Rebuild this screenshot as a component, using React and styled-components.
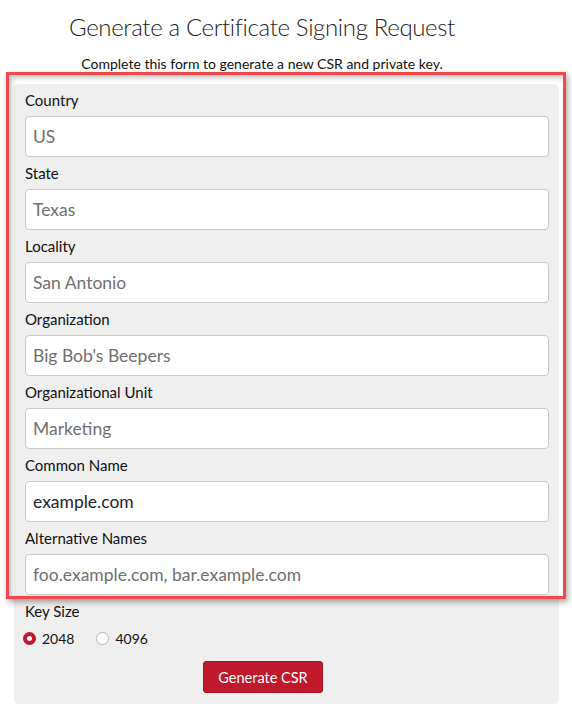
import React, { useState } from "react";
import styled, { createGlobalStyle } from "styled-components";

const GlobalStyle = createGlobalStyle`
  body {
    margin: 0;
    background: #ffffff;
    font-family: Lato, "Open Sans", sans-serif;
    color: #212529;
  }
`;

const Page = styled.div`
  width: 572px;
  padding-top: 8px;
`;

const Header = styled.div`
  text-align: center;
  padding-right: 48px;
`;

const Title = styled.h1`
  margin: 0;
  font-size: 24px;
  font-weight: 300;
  letter-spacing: -0.35px;
  line-height: 38px;
  color: #222;
`;

const Subtitle = styled.p`
  margin: 7px 0 0;
  font-size: 14px;
  line-height: 22px;
  color: #111;
`;

const Panel = styled.form`
  margin: 9px 13px 0 14px;
  padding: 6px 10px 11px 11px;
  background: #efefef;
  border-radius: 5px;
`;

const Group = styled.div`
  position: relative;
`;

const Highlight = styled.div`
  position: absolute;
  top: -18px;
  left: -19px;
  right: -17px;
  bottom: -4px;
  border: 3px solid #f2484b;
  pointer-events: none;
  box-shadow: 2px 3px 6px rgba(0, 0, 0, 0.35),
    inset 3px 3px 5px rgba(0, 0, 0, 0.22);
`;

const Field = styled.div`
  margin-bottom: 6px;
`;

const Label = styled.label`
  display: block;
  font-size: 15px;
  line-height: 20px;
  margin-top: ${(p) => (p.$gap ? "3px" : "0")};
  margin-bottom: 6px;
  color: #111;
`;

const Input = styled.input`
  box-sizing: border-box;
  display: block;
  width: 100%;
  height: 41px;
  padding: 0 7px;
  font-family: inherit;
  font-size: 17.5px;
  color: #212529;
  background: #fff;
  border: 1px solid #c8c8c8;
  border-radius: 4px;
  outline: none;

  &::placeholder {
    color: #6f6f6f;
  }
`;

const RadioRow = styled.div`
  display: flex;
  align-items: center;
  gap: 22px;
  margin-left: -2px;
  height: 22px;
`;

const RadioOption = styled.label`
  display: flex;
  align-items: center;
  gap: 6px;
  font-size: 14px;
  color: #111;
  cursor: pointer;
`;

const RadioDot = styled.span`
  box-sizing: border-box;
  width: 13px;
  height: 13px;
  border-radius: 50%;
  background: #fff;
  border: ${(p) => (p.$on ? "4px solid #c0192b" : "1px solid #b5b5b5")};
`;

const ButtonRow = styled.div`
  display: flex;
  justify-content: center;
  padding-right: 48px;
  margin-top: 12px;
`;

const Button = styled.button`
  height: 32px;
  padding: 0 14px;
  font-family: inherit;
  font-size: 14.5px;
  color: #fff;
  background: #c0192b;
  border: 1px solid #a8111f;
  border-radius: 3px;
  cursor: pointer;
`;

const fields = [
  { label: "Country", placeholder: "US" },
  { label: "State", placeholder: "Texas" },
  { label: "Locality", placeholder: "San Antonio" },
  { label: "Organization", placeholder: "Big Bob's Beepers" },
  { label: "Organizational Unit", placeholder: "Marketing" },
  { label: "Common Name", value: "example.com" },
  { label: "Alternative Names", placeholder: "foo.example.com, bar.example.com" },
];

export default function App() {
  const [keySize, setKeySize] = useState("2048");
  return (
    <Page>
      <GlobalStyle />
      <Header>
        <Title>Generate a Certificate Signing Request</Title>
        <Subtitle>Complete this form to generate a new CSR and private key.</Subtitle>
      </Header>
      <Panel onSubmit={(e) => e.preventDefault()}>
        <Group>
          {fields.map((f) => (
            <Field key={f.label}>
              <Label>{f.label}</Label>
              <Input placeholder={f.placeholder} defaultValue={f.value} />
            </Field>
          ))}
          <Highlight />
        </Group>
        <Label $gap>Key Size</Label>
        <RadioRow>
          {["2048", "4096"].map((k) => (
            <RadioOption key={k} onClick={() => setKeySize(k)}>
              <RadioDot $on={keySize === k} />
              {k}
            </RadioOption>
          ))}
        </RadioRow>
        <ButtonRow>
          <Button type="submit">Generate CSR</Button>
        </ButtonRow>
      </Panel>
    </Page>
  );
}
